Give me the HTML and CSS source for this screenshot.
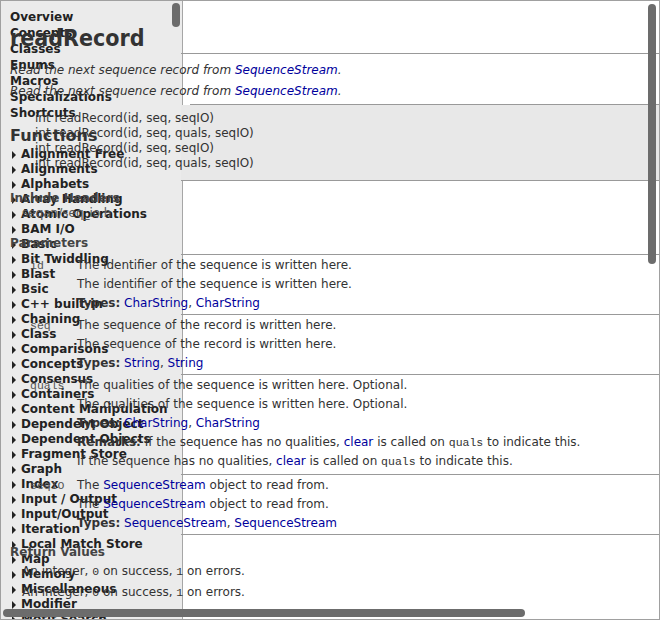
FILE: index.html
```html
<!DOCTYPE html>
<html>
<head>
<meta charset="utf-8">
<title>readRecord</title>
<link rel="stylesheet" href="styles.css">
</head>
<body>
<div class="frame">
  <nav class="sidebar">
    <ul class="toplinks">
      <li>Overview</li>
      <li>Concepts</li>
      <li>Classes</li>
      <li>Enums</li>
      <li>Macros</li>
      <li>Specializations</li>
      <li>Shortcuts</li>
    </ul>
    <div class="group-title">Functions</div>
    <ul class="groups">
      <li>Alignment Free</li>
      <li>Alignments</li>
      <li>Alphabets</li>
      <li>Array Handling</li>
      <li>Atomic Operations</li>
      <li>BAM I/O</li>
      <li>Basic</li>
      <li>Bit Twiddling</li>
      <li>Blast</li>
      <li>Bsic</li>
      <li>C++ built-in</li>
      <li>Chaining</li>
      <li>Class</li>
      <li>Comparisons</li>
      <li>Concepts</li>
      <li>Consensus</li>
      <li>Containers</li>
      <li>Content Manipulation</li>
      <li>Dependent Object</li>
      <li>Dependent Objects</li>
      <li>Fragment Store</li>
      <li>Graph</li>
      <li>Index</li>
      <li>Input / Output</li>
      <li>Input/Output</li>
      <li>Iteration</li>
      <li>Local Match Store</li>
      <li>Map</li>
      <li>Memory</li>
      <li>Miscellaneous</li>
      <li>Modifier</li>
      <li>Motif Search</li>
    </ul>
  </nav>

  <main class="content">
    <section class="sec title-sec">
      <h1>readRecord</h1>
    </section>
    <section class="sec brief">
      <p>Read the next sequence record from <a>SequenceStream</a>.</p>
      <p>Read the next sequence record from <a>SequenceStream</a>.</p>
    </section>
    <section class="sec code">
      <div class="code-bg">
        <div>int readRecord(id, seq, seqIO)</div>
        <div>int readRecord(id, seq, quals, seqIO)</div>
        <div>int readRecord(id, seq, seqIO)</div>
        <div>int readRecord(id, seq, quals, seqIO)</div>
      </div>
    </section>
    <section class="sec headers">
      <h3>Include Headers</h3>
      <div class="hdr">seqan/seq_io.h</div>
      <h3 class="params-h">Parameters</h3>
    </section>
    <section class="sec param">
      <div class="pname">id</div>
      <div class="pdesc">
        <p>The identifier of the sequence is written here.</p>
        <p>The identifier of the sequence is written here.</p>
        <p><b>Types:</b> <a>CharString</a>, <a>CharString</a></p>
      </div>
    </section>
    <section class="sec param">
      <div class="pname">seq</div>
      <div class="pdesc">
        <p>The sequence of the record is written here.</p>
        <p>The sequence of the record is written here.</p>
        <p><b>Types:</b> <a>String</a>, <a>String</a></p>
      </div>
    </section>
    <section class="sec param tall">
      <div class="pname">quals</div>
      <div class="pdesc">
        <p>The qualities of the sequence is written here. Optional.</p>
        <p>The qualities of the sequence is written here. Optional.</p>
        <p><b>Types:</b> <a>CharString</a>, <a>CharString</a></p>
        <p><b>Remarks:</b> If the sequence has no qualities, <a>clear</a> is called on <code>quals</code> to indicate this.</p>
        <p>If the sequence has no qualities, <a>clear</a> is called on <code>quals</code> to indicate this.</p>
      </div>
    </section>
    <section class="sec param">
      <div class="pname">seqIO</div>
      <div class="pdesc">
        <p>The <a>SequenceStream</a> object to read from.</p>
        <p>The <a>SequenceStream</a> object to read from.</p>
        <p><b>Types:</b> <a>SequenceStream</a>, <a>SequenceStream</a></p>
      </div>
    </section>
    <section class="returns">
      <h3>Return Values</h3>
      <p>An integer, <code>0</code> on success, <code>1</code> on errors.</p>
      <p>An integer, <code>0</code> on success, <code>1</code> on errors.</p>
    </section>
  </main>

  <div class="thumb thumb-side"></div>
  <div class="thumb thumb-v"></div>
  <div class="thumb thumb-h"></div>
</div>
</body>
</html>
```

FILE: styles.css
```css
* { box-sizing: border-box; }

html, body {
  margin: 0;
  padding: 0;
  background: #ffffff;
}

.frame {
  position: relative;
  width: 660px;
  height: 620px;
  border: 1px solid #a0a0a0;
  overflow: hidden;
  background: #ffffff;
  font-family: "DejaVu Sans", Verdana, sans-serif;
  color: #333333;
}

/* ---------- sidebar ---------- */
.sidebar {
  width: 182px;
  height: 100%;
  background: #ebebeb;
  border-right: 1px solid #a6a6a6;
  padding-top: 8px;
}

.sidebar ul {
  list-style: none;
  margin: 0;
  padding: 0;
}

.toplinks li {
  font-size: 12px;
  font-weight: bold;
  line-height: 16px;
  padding-left: 9px;
  color: #222222;
}

.group-title {
  font-size: 16px;
  font-weight: bold;
  line-height: 22px;
  margin-top: 4px;
  padding-left: 9px;
  color: #333333;
}

.groups li {
  display: flex;
  align-items: center;
  gap: 4px;
  font-size: 12px;
  font-weight: bold;
  line-height: 15px;
  padding-left: 11px;
  color: #222222;
  white-space: nowrap;
}

.groups li::before {
  content: "";
  width: 0;
  height: 0;
  border-left: 4px solid #222222;
  border-top: 4px solid transparent;
  border-bottom: 4px solid transparent;
  margin-right: 1px;
}

/* ---------- main content (drawn over the sidebar) ---------- */
.content {
  position: absolute;
  top: 0;
  left: 0;
  right: 0;
  bottom: 0;
  font-size: 12px;
}

.content p { margin: 0; }
.content a { color: #00009c; }

.sec::after {
  content: "";
  display: block;
  margin-left: 180px;
  border-top: 1px solid #999999;
}

.title-sec h1 {
  margin: 0;
  padding: 24px 0 0 9px;
  height: 52px;
  font-family: "DejaVu Sans Condensed", "DejaVu Sans", sans-serif;
  font-stretch: condensed;
  font-size: 23px;
  line-height: 26px;
  font-weight: bold;
  color: #333333;
}

.brief {
  padding-left: 9px;
}
.brief p {
  font-style: italic;
  line-height: 21px;
}
.brief p:first-child { padding-top: 6px; }
.brief p:last-child { padding-bottom: 2px; }

.code-bg {
  margin-left: 180px;
  background: #e8e8e8;
  height: 75px;
  padding-top: 6px;
}
.code-bg div {
  margin-left: -146px;
  font-size: 12px;
  line-height: 15px;
  color: #333333;
  white-space: nowrap;
}

.headers {
  padding: 10px 0 0 9px;
}
.headers h3 {
  margin: 0;
  font-size: 12px;
  line-height: 15px;
  font-weight: bold;
  color: #444444;
}
.headers .hdr {
  padding-left: 12px;
  line-height: 15px;
  color: #555555;
}
.headers .params-h {
  margin-top: 15px;
  margin-bottom: 3px;
}
.headers::after { margin-left: 171px; }

.param {
  display: grid;
  grid-template-columns: 76px 1fr;
  grid-template-areas: "name desc" "rule rule";
}
.param .pname {
  grid-area: name;
  padding-left: 29px;
  padding-top: 1px;
  font-family: "Liberation Mono", "Courier New", monospace;
  font-size: 11.5px;
  line-height: 19px;
  color: #555555;
}
.param .pdesc {
  grid-area: desc;
  padding-top: 1px;
  padding-bottom: 1px;
}
.param.tall .pdesc { padding-bottom: 3px; }
.param .pdesc p {
  line-height: 19px;
  white-space: nowrap;
}
.param::after { grid-area: rule; }

code {
  font-family: "Liberation Mono", "Courier New", monospace;
  font-size: 11.5px;
}

.returns {
  padding: 10px 0 0 9px;
}
.returns h3 {
  margin: 0;
  font-size: 12px;
  line-height: 15px;
  font-weight: bold;
  color: #444444;
}
.returns p {
  padding-left: 12px;
  line-height: 20px;
  margin-top: 0;
}
.returns h3 + p { margin-top: 1px; }

/* ---------- scrollbar thumbs (overlays) ---------- */
.thumb {
  position: absolute;
  background: #6c6c6c;
  border-radius: 4px;
}
.thumb-side { left: 171px; top: 2px; width: 8px; height: 24px; }
.thumb-v { left: 647px; top: 3px; width: 8px; height: 260px; }
.thumb-h { left: 2px; top: 608px; width: 522px; height: 8px; }
```
